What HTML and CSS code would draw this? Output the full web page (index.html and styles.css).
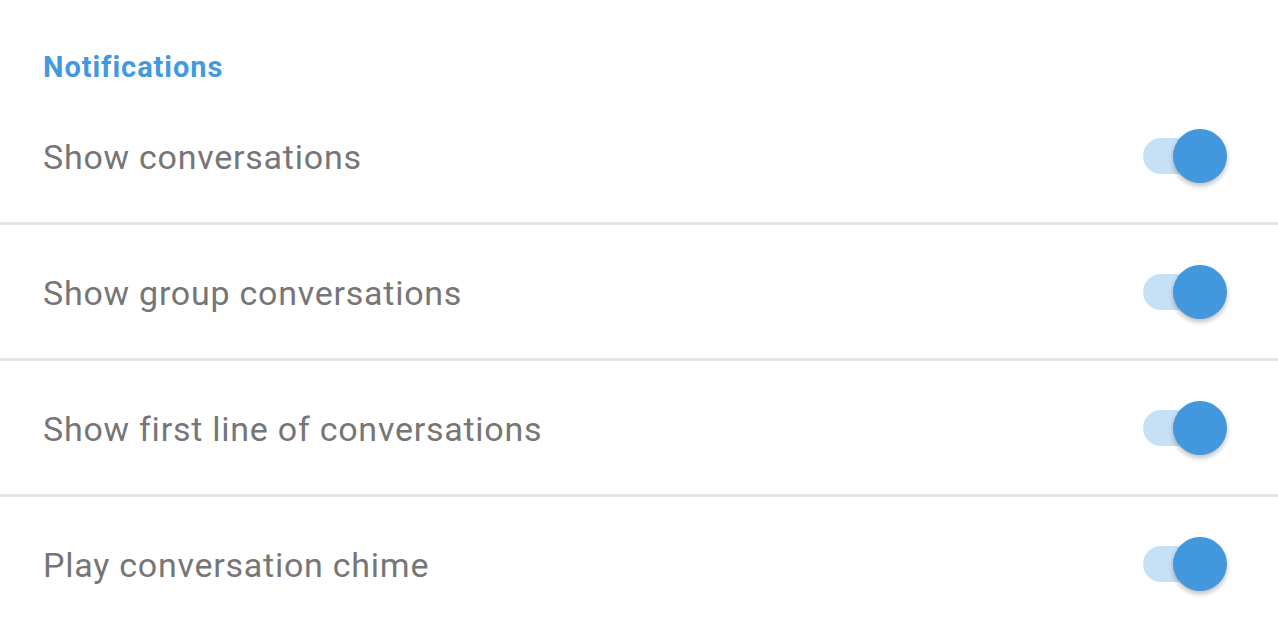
FILE: index.html
```html
<!DOCTYPE html>
<html>
<head>
    <meta charset="UTF-8">
    <title>Notifications</title>
    <link rel="stylesheet" href="styles.css">
</head>
<body>
    <h2 class="section-title">Notifications</h2>

    <div class="settings">
        <div class="row">
            <span class="label">Show conversations</span>
            <span class="switch"><span class="track"></span><span class="thumb"></span></span>
        </div>
        <div class="row">
            <span class="label">Show group conversations</span>
            <span class="switch"><span class="track"></span><span class="thumb"></span></span>
        </div>
        <div class="row">
            <span class="label">Show first line of conversations</span>
            <span class="switch"><span class="track"></span><span class="thumb"></span></span>
        </div>
        <div class="row last">
            <span class="label">Play conversation chime</span>
            <span class="switch"><span class="track"></span><span class="thumb"></span></span>
        </div>
    </div>
</body>
</html>
```

FILE: styles.css
```css
body {
    margin: 0;
    background: #fff;
    font-family: Roboto, "Liberation Sans", Arial, sans-serif;
}

.section-title {
    margin: 0;
    height: 89px;
    box-sizing: border-box;
    padding: 51px 0 0 43px;
    font-size: 29px;
    line-height: 32px;
    letter-spacing: 0.95px;
    font-weight: bold;
    color: #4399e0;
}

.row {
    display: flex;
    align-items: center;
    justify-content: space-between;
    height: 133px;
    padding: 0 51px 0 43px;
    border-bottom: 3px solid #e4e4e4;
}

.row.last {
    border-bottom: none;
}

.label {
    font-size: 34px;
    letter-spacing: 0.75px;
    color: #767676;
    margin-top: 3px;
}

.switch {
    position: relative;
    width: 84px;
    height: 54px;
}

.track {
    position: absolute;
    left: 0;
    top: 9px;
    width: 74px;
    height: 36px;
    border-radius: 18px;
    background: #c6e1f6;
}

.thumb {
    position: absolute;
    right: 0;
    top: 0;
    width: 54px;
    height: 54px;
    border-radius: 50%;
    background: #4297dd;
    box-shadow: 0 3px 5px rgba(0, 0, 0, 0.25);
}
```
